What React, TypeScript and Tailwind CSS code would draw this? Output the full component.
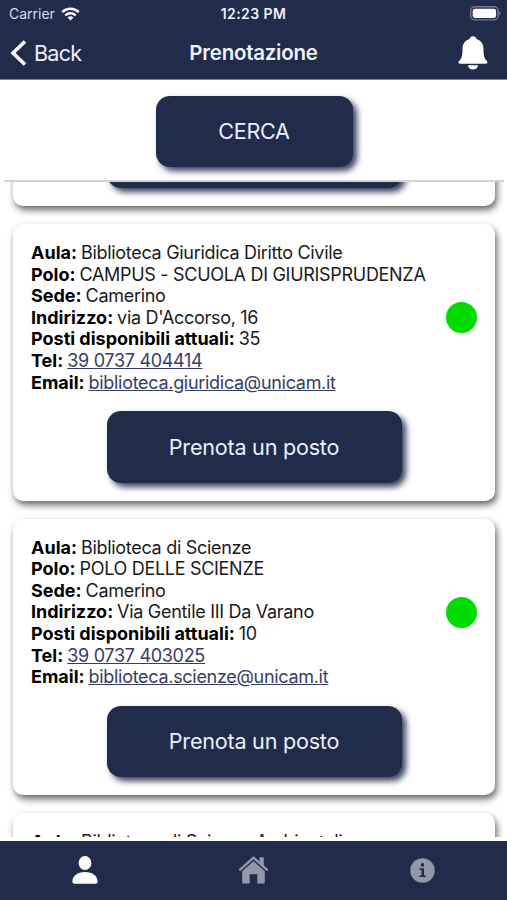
import type {ReactNode} from 'react';

type Room = {
    aula: string;
    polo: string;
    sede: string;
    indirizzo: string;
    posti: number;
    tel: string;
    email: string;
};

const rooms: Room[] = [
    {
        aula: 'Biblioteca Giuridica Diritto Civile',
        polo: 'CAMPUS - SCUOLA DI GIURISPRUDENZA',
        sede: 'Camerino',
        indirizzo: "via D'Accorso, 16",
        posti: 35,
        tel: '39 0737 404414',
        email: 'biblioteca.giuridica@unicam.it',
    },
    {
        aula: 'Biblioteca di Scienze',
        polo: 'POLO DELLE SCIENZE',
        sede: 'Camerino',
        indirizzo: 'Via Gentile III Da Varano',
        posti: 10,
        tel: '39 0737 403025',
        email: 'biblioteca.scienze@unicam.it',
    },
];

const Card = ({children}: {children: ReactNode}) => (
    <div className="relative shrink-0 rounded-[10px] bg-white p-[18px] shadow-[2px_4px_7px_rgba(0,0,0,0.6)]">
        {children}
    </div>
);

const BookButton = () => (
    <button
        className="mx-auto block h-[71.5px] w-[295px] rounded-[14px] bg-[#212b4a] text-[21.6px] tracking-[-0.24px] text-[#e9effb] shadow-[4px_4px_6px_rgba(33,43,74,0.9)]">
        Prenota un posto
    </button>
);

const Row = ({label, children}: {label: string; children: ReactNode}) => (
    <p className="h-[21.6px] tracking-[-0.3px] whitespace-nowrap">
        <b className="mr-[-0.8px] font-bold tracking-[0px] text-black">{label}:</b> {children}
    </p>
);

const RoomCard = ({room}: {room: Room}) => (
    <Card>
        <div className="flex items-center justify-between">
            <div className="text-[18px] leading-[22.4px] text-[#1a1a1a]">
                <Row label="Aula">{room.aula}</Row>
                <Row label="Polo">{room.polo}</Row>
                <Row label="Sede">{room.sede}</Row>
                <Row label="Indirizzo">{room.indirizzo}</Row>
                <Row label="Posti disponibili attuali">{room.posti}</Row>
                <Row label="Tel">
                    <a className="text-[#363d63] underline">{room.tel}</a>
                </Row>
                <Row label="Email">
                    <a className="text-[#363d63] underline">{room.email}</a>
                </Row>
            </div>
            <div className="h-[31px] w-[31px] shrink-0 rounded-full bg-[#00dc00]"/>
        </div>
        <div className="pt-[18px]">
            <BookButton/>
        </div>
    </Card>
);

const StatusBar = () => (
    <div className="grid h-[27px] grid-cols-3 items-center px-[9px] text-[14px]">
        <div className="flex items-center gap-[6px] text-[#d9deea]">
            Carrier
            <svg width="19" height="14" viewBox="0 0 19 14" fill="none" stroke="#fff" strokeWidth="2.4">
                <path d="M1.2 5.2a11.8 11.8 0 0 1 16.6 0"/>
                <path d="M4.3 8.4a7.4 7.4 0 0 1 10.4 0"/>
                <path d="M9.5 13.6 6.6 10.6a4.2 4.2 0 0 1 5.8 0Z" fill="#fff" stroke="none"/>
            </svg>
        </div>
        <div className="text-center font-semibold tracking-[0.4px] text-[#eef1f8]">12:23 PM</div>
        <svg className="-mr-[3px] justify-self-end" width="31" height="15" viewBox="0 0 31 15">
            <rect x="0.7" y="0.7" width="27.4" height="13.2" rx="4" fill="none" stroke="#737a91" strokeWidth="1.4"/>
            <rect x="2.7" y="2.7" width="23.4" height="9.4" rx="2.4" fill="#fff"/>
            <path d="M29.2 5.2c1.8.7 1.8 3.6 0 4.3Z" fill="#737a91"/>
        </svg>
    </div>
);

const Header = () => (
    <div className="grid h-[53px] grid-cols-3 items-center border-b border-[#7d8498] px-[10px]">
        <div className="flex items-center gap-[7px] text-[21.6px] tracking-[-0.8px] text-[#e9effb]">
            <svg width="17" height="26" viewBox="0 0 17 26" fill="none" stroke="#fff" strokeWidth="3.6">
                <path d="M15 1.5 3 13l12 11.5"/>
            </svg>
            Back
        </div>
        <div className="text-center text-[20.5px] font-semibold tracking-[-0.25px] text-[#eef2fb]">Prenotazione</div>
        <svg className="mr-[9px] justify-self-end" width="30" height="34" viewBox="0 0 30 34" fill="#fff">
            <path d="M15 .3c1.9 0 3 1.1 3.5 2.6 4.7 1.5 7 5.2 7 10 0 7.4 1 9.6 3.4 12 1.3 1.4.5 2.9-1.1 2.9H2.2c-1.6 0-2.4-1.5-1.1-2.9 2.4-2.4 3.4-4.6 3.4-12 0-4.8 2.3-8.5 7-10C12 1.4 13.1.3 15 .3Z"/>
            <path d="M10 29.3h10a5 4.3 0 0 1-10 0Z"/>
        </svg>
    </div>
);

const TabBar = () => (
    <div className="grid h-[59px] grid-cols-3 items-center justify-items-center bg-[#212b4a]">
        <svg className="-mt-[1px]" width="26" height="28" viewBox="0 0 26 28" fill="#fff">
            <ellipse cx="13" cy="7" rx="6.4" ry="7"/>
            <path d="M.4 25.5C.4 20 5.5 16 13 16s12.6 4 12.6 9.5c0 1.3-.6 2.2-2 2.2H2.4c-1.4 0-2-.9-2-2.2Z"/>
        </svg>
        <svg className="-mt-[1px]" width="29" height="28" viewBox="0 0 29 28" fill="#9398a9">
            <path d="M14.5 5 25.8 15.2v11c0 .8-.6 1.3-1.3 1.3h-6.2v-9.3h-7.6v9.3H4.5c-.7 0-1.3-.5-1.3-1.3v-11Z"/>
            <path d="M1.2 13.6 14.5 1.6l13.3 12" fill="none" stroke="#212b4a" strokeWidth="4.2"/>
            <path d="M20.4 1.9c0-.5.3-.7.7-.7h3c.4 0 .7.2.7.7v9L20.4 7Z"/>
            <path d="M1.2 13.6 14.5 1.6l13.3 12" fill="none" stroke="#9398a9" strokeWidth="2.5" strokeLinecap="round" strokeLinejoin="round"/>
        </svg>
        <svg className="-mt-[1px]" width="25" height="25" viewBox="0 0 25 25">
            <circle cx="12.5" cy="12.5" r="12.2" fill="#9398a9"/>
            <circle cx="12.5" cy="6.9" r="1.8" fill="#212b4a"/>
            <path d="M9.6 10.2h4.4v7.2h1.9v1.7H9.3v-1.7h2.2v-5.5H9.6Z" fill="#212b4a"/>
        </svg>
    </div>
);

const App = () => (
    <div className="flex h-[900px] w-[507px] flex-col overflow-hidden bg-white font-['Inter',sans-serif]">
        <div className="h-[80px] shrink-0 bg-[#212b4a]">
            <StatusBar/>
            <Header/>
        </div>
        <div className="mr-[3px] ml-1 flex h-[102px] shrink-0 justify-center border-b-2 border-[#d3d3d6] pt-[15.5px]">
            <button
                className="h-[71.5px] w-[197px] rounded-[14px] bg-[#212b4a] text-[21.6px] tracking-[-0.3px] text-[#e9effb] shadow-[4px_4px_6px_rgba(33,43,74,0.9)]">
                CERCA
            </button>
        </div>
        <div className="mr-[3px] ml-1 h-[655px] shrink-0 overflow-hidden">
            <div className="-mt-[83.5px] flex flex-col gap-[18px] px-[9px]">
                {/* end of the previous card, scrolled under the search bar */}
                <Card>
                    <BookButton/>
                </Card>
                {rooms.map((room) => (
                    <RoomCard key={room.aula} room={room}/>
                ))}
                <Card>
                    <div className="text-[18px] leading-[22.4px] text-[#1a1a1a]">
                        <Row label="Aula">Biblioteca di Scienze Ambientali</Row>
                    </div>
                </Card>
            </div>
        </div>
        <div className="h-1 shrink-0"/>
        <TabBar/>
    </div>
);

export default App;
